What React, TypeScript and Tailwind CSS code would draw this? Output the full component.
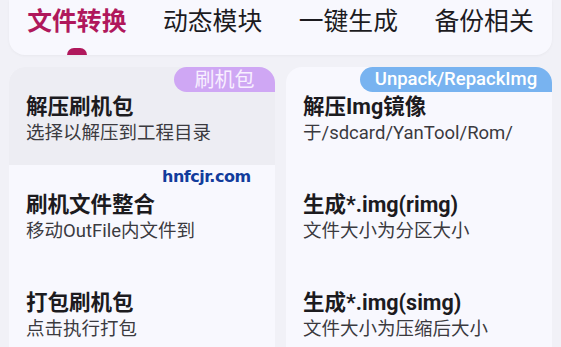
import React from "react";

const tabs = ["文件转换", "动态模块", "一键生成", "备份相关"];

const left = [
  { title: "解压刷机包", sub: "选择以解压到工程目录", active: true },
  { title: "刷机文件整合", sub: "移动OutFile内文件到" },
  { title: "打包刷机包", sub: "点击执行打包" },
];

const right = [
  { title: "解压Img镜像", sub: "于/sdcard/YanTool/Rom/" },
  { title: "生成*.img(rimg)", sub: "文件大小为分区大小" },
  { title: "生成*.img(simg)", sub: "文件大小为压缩后大小" },
];

function Item({ title, sub, active }: { title: string; sub: string; active?: boolean }) {
  return (
    <div className={`h-[98px] pl-[17px] pt-[26px] ${active ? "bg-[#ededf3]" : ""}`}>
      <div className="text-[21.5px] leading-[27px] font-bold text-[#1c1b1f]">{title}</div>
      <div className="text-[18.5px] leading-[22px] mt-[2px] text-[#3b3a3f]">{sub}</div>
    </div>
  );
}

export default function App() {
  return (
    <div
      className="relative w-[561px] h-[347px] overflow-hidden bg-[#f1f1f7] px-[9px]"
      style={{ fontFamily: "Roboto, 'Noto Sans CJK SC', sans-serif" }}
    >
      {/* Tabs */}
      <div className="h-[55px] grid grid-cols-4 bg-[#f8f8fe] rounded-b-[16px] shadow-[0_1px_3px_rgba(0,0,0,0.04)]">
        {tabs.map((t, i) => (
          <div key={t} className="relative flex justify-center pt-[6px]">
            <span
              className={`text-[24.8px] leading-[32px] ${
                i === 0 ? "font-bold text-[#b0185c]" : "text-[#1c1b1f]"
              }`}
            >
              {t}
            </span>
            {i === 0 && (
              <div className="absolute bottom-0 left-1/2 -translate-x-1/2 w-[20px] h-[7px] rounded-t-full bg-[#b0185c]" />
            )}
          </div>
        ))}
      </div>

      {/* Cards */}
      <div className="mt-[12px] grid grid-cols-2 gap-[11px]">
        <div className="relative rounded-t-[16px] overflow-hidden bg-[#f8f8fe] h-[300px]">
          <div className="absolute top-0 right-0 h-[25px] w-[101px] rounded-l-[14px] bg-[#cfa7f4] flex items-center justify-center text-[20px] leading-none text-[#f8f0ff] z-10">
            刷机包
          </div>
          {left.map((it) => (
            <Item key={it.title} {...it} />
          ))}
        </div>
        <div className="relative rounded-t-[16px] overflow-hidden bg-[#f8f8fe] h-[300px]">
          <div className="absolute top-0 right-0 h-[25px] w-[192px] rounded-l-[14px] bg-[#78b3f0] flex items-center justify-center text-[18.5px] leading-none font-medium text-white z-10">
            Unpack/RepackImg
          </div>
          {right.map((it) => (
            <Item key={it.title} {...it} />
          ))}
        </div>
      </div>

      {/* watermark */}
      <div
        className="absolute left-[162px] top-[165px] text-[16px] font-bold text-[#123c9c] tracking-[-0.5px]"
        style={{ fontFamily: "'DejaVu Sans', sans-serif" }}
      >
        hnfcjr.com
      </div>
    </div>
  );
}
